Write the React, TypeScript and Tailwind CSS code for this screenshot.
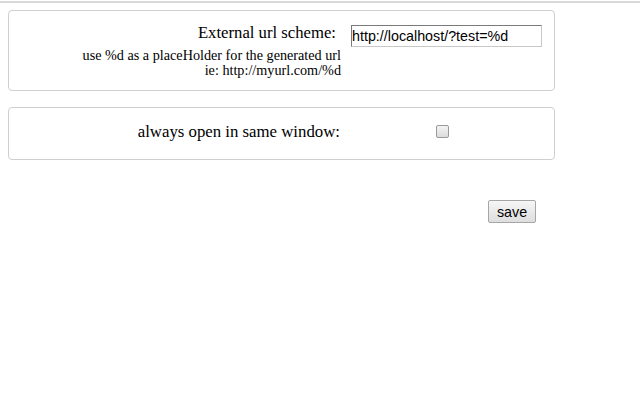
export default function App() {
  return (
    <div className="w-[640px] h-[400px] bg-white relative overflow-hidden font-['Liberation_Serif',serif] text-black">
      <div className="h-[2px] mt-px bg-[#d9d9d9]" />
      <div className="pl-2 pt-[7px] w-[555px]">
        <div className="border border-[#cfcfcf] rounded-[4px] h-[81px] flex">
          <div className="w-[333px] flex flex-col items-end pt-[12px]">
            <div className="text-[16.7px] leading-[19px] pr-[6px]">External url scheme:</div>
            <div className="text-[14.2px] leading-[15px] text-right mt-[6px] pr-px">
              use %d as a placeHolder for the generated url
              <br />
              ie: http://myurl.com/%d
            </div>
          </div>
          <div className="pl-[9px] pt-[13px]">
            <input
              type="text"
              defaultValue="http://localhost/?test=%d"
              className="w-[191px] h-[22px] px-0 text-[14.3px] font-['Liberation_Sans',sans-serif] border border-[#c8c8c8] border-t-[#7a7a7a] border-l-[#7a7a7a] outline-none"
            />
          </div>
        </div>
        <div className="border border-[#cfcfcf] rounded-[4px] h-[53px] mt-[16px] flex items-center">
          <div className="w-[333px] text-right text-[16.8px] leading-[19px] pb-[4px] pr-[2px]">always open in same window:</div>
          <div className="flex-1 flex justify-center pr-[12px] pb-[4px]">
            <span className="w-[13px] h-[13px] border border-[#9a9a9a] rounded-[2px] bg-gradient-to-b from-[#f4f4f4] to-[#dcdcdc]" />
          </div>
        </div>
        <div className="flex justify-end pr-[19px] mt-[40px]">
          <button className="w-[48px] h-[23px] text-[14.3px] leading-[18px] font-['Liberation_Sans',sans-serif] border border-[#a6a6a6] rounded-[2px] bg-gradient-to-b from-[#f6f6f6] to-[#dedede]">
            save
          </button>
        </div>
      </div>
    </div>
  );
}
